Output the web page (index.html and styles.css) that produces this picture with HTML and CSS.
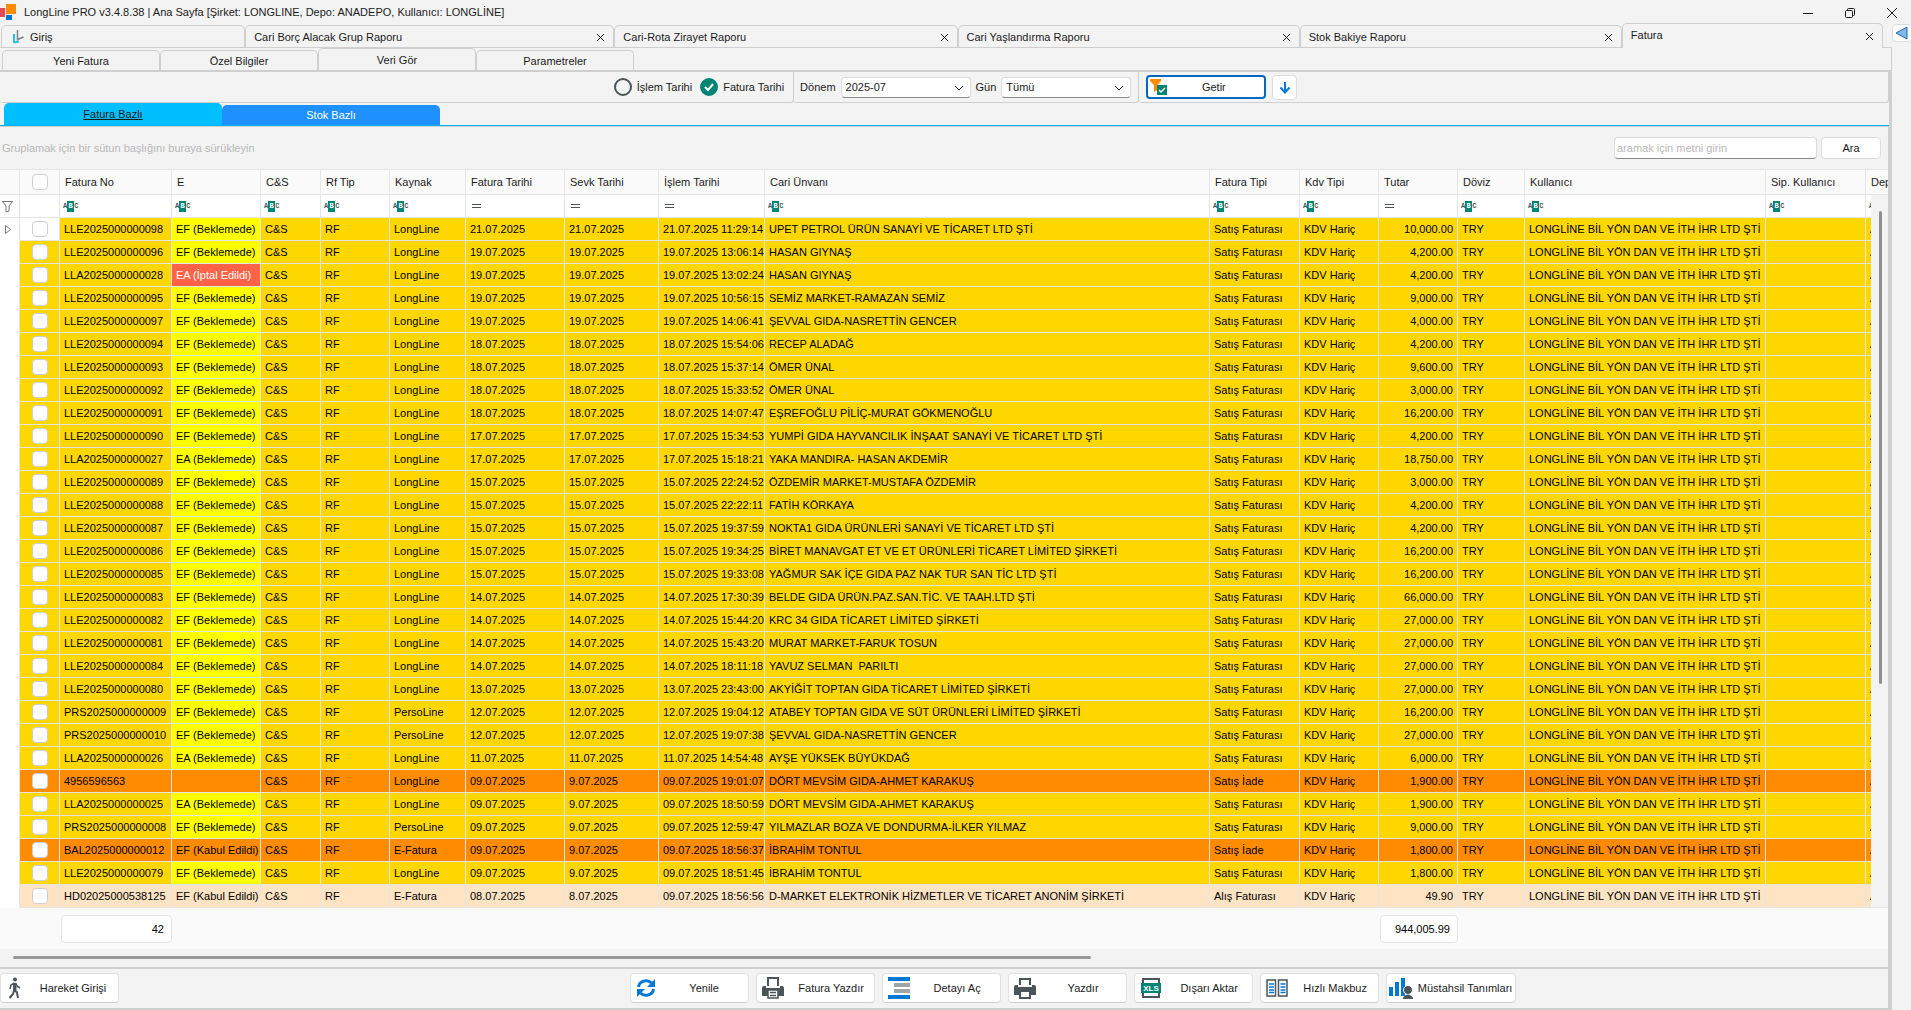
FILE: index.html
```
<!DOCTYPE html>
<html lang="tr">
<head>
    <meta charset="UTF-8">
    <meta name="viewport" content="width=device-width, initial-scale=1.0">
    <title>LongLine PRO v3.4.8.38 | Ana Sayfa</title>
    <link rel="stylesheet" href="styles.css">
</head>
<body>
    <header class="titlebar">
        <svg class="logo" width="16" height="18" viewBox="0 0 16 18"><rect x="0" y="5" width="5" height="9" fill="#e74856"/><rect x="6" y="1" width="10" height="10" fill="#ff8c00"/><rect x="6" y="12" width="6" height="5" fill="#0078d7"/></svg>
        <h1>LongLine PRO v3.4.8.38 | Ana Sayfa [Şirket: LONGLINE, Depo: ANADEPO, Kullanıcı: LONGLİNE]</h1>
        <div class="window-buttons">
            <button aria-label="Simge durumuna küçült"><svg width="12" height="12"><path d="M1 6.5h10"/></svg></button>
            <button aria-label="Önceki boyut"><svg width="12" height="12"><rect x="1.5" y="3.5" width="7" height="7" rx="1"/><path d="M3.5 3.5v-1q0-1 1-1h5q1 0 1 1v5q0 1-1 1h-1"/></svg></button>
            <button aria-label="Kapat"><svg width="12" height="12"><path d="M1 1l10 10M11 1L1 11"/></svg></button>
        </div>
    </header>

    <div class="frame">
        <main class="workspace">
            <nav class="doc-tabs">
                <div class="doc-tab home">
                    <svg width="14" height="14" viewBox="0 0 14 14" fill="none"><path d="M2 4v9M2 12.500l5-1" stroke="#1fc8d8" stroke-width="2"/><path d="M5.500 0v9.500l6-2.500" stroke="#7d8488" stroke-width="1.500"/></svg>
                    <button class="name">Giriş</button>
                </div>
                <div class="doc-tab borc"><button class="name">Cari Borç Alacak Grup Raporu</button><button class="close" aria-label="Kapat"><svg width="9" height="9"><path d="M1 1l7 7M8 1L1 8"/></svg></button></div>
                <div class="doc-tab rota"><button class="name">Cari-Rota Zirayet Raporu</button><button class="close" aria-label="Kapat"><svg width="9" height="9"><path d="M1 1l7 7M8 1L1 8"/></svg></button></div>
                <div class="doc-tab yas"><button class="name">Cari Yaşlandırma Raporu</button><button class="close" aria-label="Kapat"><svg width="9" height="9"><path d="M1 1l7 7M8 1L1 8"/></svg></button></div>
                <div class="doc-tab stok"><button class="name">Stok Bakiye Raporu</button><button class="close" aria-label="Kapat"><svg width="9" height="9"><path d="M1 1l7 7M8 1L1 8"/></svg></button></div>
                <div class="doc-tab fatura active"><button class="name">Fatura</button><button class="close" aria-label="Kapat"><svg width="9" height="9"><path d="M1 1l7 7M8 1L1 8"/></svg></button></div>
            </nav>

            <div class="panel">
                <nav class="sub-tabs">
                    <button>Yeni Fatura</button>
                    <button>Özel Bilgiler</button>
                    <button class="active">Veri Gör</button>
                    <button>Parametreler</button>
                </nav>

                <div class="sub-content">
                    <form class="toolbar">
                        <div class="group dates">
                            <label><input type="radio" name="tarih"> İşlem Tarihi</label>
                            <label><input type="radio" name="tarih" checked><svg class="tick" width="18" height="18"><path d="M5 9l3 3 5-6"/></svg> Fatura Tarihi</label>
                        </div>
                        <div class="group period">
                            <label for="donem">Dönem</label>
                            <span class="select"><select id="donem"><option>2025-07</option></select><svg width="10" height="6"><path d="M1 1l4 4 4-4"/></svg></span>
                            <label for="gun">Gün</label>
                            <span class="select"><select id="gun"><option>Tümü</option></select><svg width="10" height="6"><path d="M1 1l4 4 4-4"/></svg></span>
                        </div>
                        <div class="group actions">
                            <button type="button" class="fetch">
                                <svg width="17" height="16" viewBox="0 0 17 16"><path d="M0 0h11v2L7.500 6v5L4 13V6L0 2z" fill="#ff8c00"/><rect x="7" y="6" width="10" height="10" fill="#008575"/><path d="M9 11l2 2 4-4" fill="none" stroke="#fff" stroke-width="1.500"/></svg>
                                <span>Getir</span>
                            </button>
                            <button type="button" class="down" aria-label="Aşağı"><svg width="12" height="14" viewBox="0 0 12 14"><path d="M6 1v10M1.500 6.500L6 11.500l4.500-5" fill="none" stroke="#0078d7" stroke-width="2"/></svg></button>
                        </div>
                    </form>

                    <nav class="view-tabs">
                        <button class="active">Fatura Bazlı</button>
                        <button>Stok Bazlı</button>
                    </nav>

                    <div class="grid-content">
                        <div class="group-panel">
                            <span class="hint">Gruplamak için bir sütun başlığını buraya sürükleyin</span>
                            <input type="text" class="search" aria-label="Ara" placeholder="aramak için metni girin">
                            <button class="find">Ara</button>
                        </div>

                        <div class="grid">
                            <table>
                                <colgroup>
                                    <col class="w-ind"><col class="w-check"><col class="w-no"><col class="w-e"><col class="w-cs"><col class="w-rf"><col class="w-src"><col class="w-date"><col class="w-ship"><col class="w-time"><col class="w-title"><col class="w-type"><col class="w-kdv"><col class="w-kdv"><col class="w-cur"><col class="w-user"><col class="w-order"><col>
                                </colgroup>
                                <thead>
                                    <tr>
                                        <th></th><th class="center"><input type="checkbox" aria-label="Tümünü seç"></th>
                                        <th>Fatura No</th><th>E</th><th>C&amp;S</th><th>Rf Tip</th><th>Kaynak</th><th>Fatura Tarihi</th><th>Sevk Tarihi</th><th>İşlem Tarihi</th><th>Cari Ünvanı</th><th>Fatura Tipi</th><th>Kdv Tipi</th><th>Tutar</th><th>Döviz</th><th>Kullanıcı</th><th>Sip. Kullanıcı</th><th>Depo</th>
                                    </tr>
                                    <tr class="filter" id="filter"></tr>
                                </thead>
                                <tbody id="rows"></tbody>
                                <tfoot>
                                    <tr>
                                        <td colspan="2"></td>
                                        <td><output>42</output></td>
                                        <td colspan="10"></td>
                                        <td><output>944,005.99</output></td>
                                        <td colspan="4"></td>
                                    </tr>
                                </tfoot>
                            </table>
                            <div class="v-scroll"><div class="thumb"></div></div>
                        </div>
                        <div class="h-scroll"><div class="thumb"></div></div>

                        <footer class="commands">
                            <button>
                                <svg width="18" height="22" viewBox="0 0 18 22" fill="none" stroke="#4a5459"><circle cx="9" cy="2.500" r="2" fill="#4a5459" stroke="none"/><path d="M8.500 6.500l-.5 6 3 3 1 5.500M8 13.500l-1 3.500-3.500 4" stroke-width="2"/><path d="M8.500 6L5 8l-1 4M9.500 6l2 3.500 2.500 1.500" stroke-width="1.500"/><path d="M7 6h3.500v7H7.500z" fill="#4a5459" stroke="none"/></svg>
                                <span>Hareket Girişi</span>
                            </button>
                            <div class="command-group">
                                <button>
                                    <svg width="20" height="20" viewBox="0 0 20 20" fill="none" stroke="#0078d7" stroke-width="3"><path d="M2.500 9A7.500 7 0 0 1 15.500 5M17.500 11A7.500 7 0 0 1 4.500 15"/><path d="M19 1v8h-8zM1 19v-8h8z" fill="#0078d7" stroke="none"/></svg>
                                    <span>Yenile</span>
                                </button>
                                <button>
                                    <svg width="22" height="24" viewBox="0 0 22 24"><path d="M6 10V2h10v8" fill="#fff" stroke="#4a5459" stroke-width="2"/><path d="M0 12q0-2 2-2h2v2h14v-2h2q2 0 2 2v8H0z" fill="#4a5459"/><path d="M6 14h10v8H6z" fill="#fff" stroke="#4a5459" stroke-width="1.500"/><path d="M8 16.500h6M8 19.500h6" stroke="#4a5459" stroke-width="1.500"/></svg>
                                    <span>Fatura Yazdır</span>
                                </button>
                                <button>
                                    <svg width="22" height="24" viewBox="0 0 22 24"><path d="M0 1h22v4H0zM0 19h22v4H0z" fill="#0078d7"/><path d="M6 7h16v4H6zM6 13h16v4H6z" fill="#a0a5a8"/></svg>
                                    <span>Detayı Aç</span>
                                </button>
                                <button>
                                    <svg width="22" height="22" viewBox="0 0 22 22"><path d="M6 8V2h10v6" fill="#fff" stroke="#4a5459" stroke-width="2"/><path d="M0 10q0-2 2-2h2v2h14V8h2q2 0 2 2v8H0z" fill="#4a5459"/><path d="M6 14h10v7H6z" fill="#fff" stroke="#4a5459" stroke-width="2"/></svg>
                                    <span>Yazdır</span>
                                </button>
                                <button>
                                    <svg width="22" height="22" viewBox="0 0 22 22"><path d="M3 2h16v18H3z" fill="#fff" stroke="#4a5459" stroke-width="2"/><rect x="1" y="6" width="20" height="10" fill="#008575"/><text x="11" y="14" class="xls">XLS</text></svg>
                                    <span>Dışarı Aktar</span>
                                </button>
                                <button>
                                    <svg width="22" height="18" viewBox="0 0 22 18"><path d="M1 1h8.500v16H1zM12.500 1H21v16h-8.500z" fill="#fff" stroke="#4a5459" stroke-width="1.500"/><path d="M3 5h5M3 8h5M3 11h5M3 13.500h5M14.500 5h5M14.500 8h5M14.500 11h5M14.500 13.500h5" stroke="#0078d7" stroke-width="1.500"/></svg>
                                    <span>Hızlı Makbuz</span>
                                </button>
                                <button class="wide">
                                    <svg width="24" height="22" viewBox="0 0 24 22"><path d="M0 10h4v9H0zM6 5h4v14H6zM12 1h4v18h-4z" fill="#0078d7"/><circle cx="19" cy="13" r="4.500" fill="#4a5459" stroke="#fff"/><path d="M14 22v-1q1-3 5-3.500 4 .5 5 3.500v1z" fill="#4a5459"/></svg>
                                    <span>Müstahsil Tanımları</span>
                                </button>
                            </div>
                        </footer>
                    </div>
                </div>
            </div>
        </main>
        <aside class="side">
            <button aria-label="Paneli aç"><svg width="13" height="14" viewBox="0 0 13 14"><path d="M12 1v12L1 7z" fill="#7db9ea" stroke="#2b68b5"/></svg></button>
        </aside>
    </div>

    <script src="script.js"></script>
</body>
</html>
```
FILE: styles.css
```
* {
    box-sizing: border-box;
}
body {
    margin: 0;
    min-height: 100vh;
    display: flex;
    flex-direction: column;
    background-color: #f3f3f3;
    color: #1b1b1b;
    font-family: "Liberation Sans", Arial, sans-serif;
    font-size: 11px;
    line-height: 14px;
    overflow: hidden;
}
button, input, select {
    font: inherit;
    color: inherit;
    margin: 0;
}
button {
    padding: 0;
    border: none;
    background: none;
    white-space: nowrap;
}

/* title bar */
.titlebar {
    display: flex;
    align-items: center;
    height: 23px;
    gap: 8px;
}
.titlebar h1 {
    flex: 1;
    margin: 0;
    font-size: 11px;
    font-weight: normal;
}
.window-buttons {
    display: flex;
    gap: 4px;
}
.window-buttons button {
    width: 38px;
    height: 22px;
}
.window-buttons svg, .close svg, .select svg {
    fill: none;
    stroke: #1b1b1b;
    vertical-align: middle;
}

.frame {
    flex: 1;
    display: flex;
}
.workspace {
    flex: 1;
    min-width: 0;
    display: flex;
    flex-direction: column;
}
.side {
    width: 19px;
    padding-top: 1px;
}
.side button {
    display: flex;
    align-items: center;
    width: 20px;
    height: 18px;
    padding-left: 2px;
    background: #fff;
    border: 1px solid #dcdcdc;
    border-radius: 4px;
}

/* document tabs */
.doc-tabs {
    display: flex;
    align-items: flex-end;
    height: 25px;
    padding: 0 9px 0 1px;
    border-bottom: 1px solid #cfcfcf;
}
.doc-tab {
    display: flex;
    align-items: center;
    height: 22px;
    min-width: 0;
    padding: 0 8px;
    border: 1px solid #cfcfcf;
    border-bottom: none;
    border-radius: 5px 5px 0 0;
}
.doc-tab.active {
    height: 25px;
    margin-bottom: -1px;
    padding-bottom: 2px;
    background: #f3f3f3;
}
.doc-tab .name {
    flex: 1;
    text-align: left;
}
.doc-tab.home {
    gap: 4px;
    padding-left: 10px;
}
.home { flex: 1 1 244px; }
.borc { flex: 1 1 369px; }
.rota { flex: 1 1 343px; }
.yas { flex: 1 1 342px; }
.stok { flex: 1 1 322px; }
.fatura { flex: 1 1 261px; }

.panel {
    flex: 1;
    display: flex;
    flex-direction: column;
    border-right: 1px solid #cfcfcf;
}
.sub-tabs {
    display: flex;
    align-items: flex-end;
    height: 24px;
    padding-left: 2px;
    border-bottom: 2px solid #cfcfcf;
}
.sub-tabs button {
    width: 158px;
    height: 20px;
    border: 1px solid #cfcfcf;
    border-bottom: none;
    border-radius: 5px 5px 0 0;
}
.sub-tabs button.active {
    height: 22px;
}
.sub-content {
    flex: 1;
    display: flex;
    flex-direction: column;
    border-right: 2px solid #cfcfcf;
}

/* filter toolbar */
.toolbar {
    display: flex;
    height: 31px;
}
.group {
    display: flex;
    align-items: center;
    border-right: 1px solid #cfcfcf;
    border-bottom: 1px solid #cfcfcf;
    border-radius: 0 0 3px 3px;
}
.dates {
    flex: 794 1 0;
    justify-content: flex-end;
    gap: 8px;
    padding-right: 9px;
}
.dates label {
    position: relative;
    display: flex;
    align-items: center;
    gap: 5px;
}
.dates input {
    appearance: none;
    width: 18px;
    height: 18px;
    border: 2px solid #4a5459;
    border-radius: 50%;
}
.dates input:checked {
    border-color: #008575;
    background: #008575;
}
.tick {
    position: absolute;
    left: 0;
    fill: none;
    stroke: #fff;
    stroke-width: 2;
    pointer-events: none;
}
.period {
    gap: 5px;
    padding: 0 7px 0 6px;
}
.select {
    position: relative;
    display: flex;
}
.select select {
    appearance: none;
    width: 130px;
    height: 21px;
    padding: 0 4px;
    background: #fff;
    border: 1px solid #dcdcdc;
    border-bottom-color: #8a8a8a;
    border-radius: 4px;
}
.select svg {
    position: absolute;
    right: 7px;
    top: 8px;
    pointer-events: none;
}
.actions {
    flex: 751 1 0;
    gap: 6px;
    padding-left: 7px;
}
.fetch {
    display: flex;
    align-items: center;
    width: 120px;
    height: 24px;
    padding-left: 2px;
    background: #fff;
    border: 2px solid #0067c0;
    border-radius: 4px;
}
.fetch span {
    flex: 1;
    padding-right: 4px;
}
.down {
    width: 25px;
    height: 25px;
    background: #fff;
    border: 1px solid #dcdcdc;
    border-radius: 4px;
}
.down svg {
    vertical-align: middle;
}

/* coloured view tabs */
.view-tabs {
    display: flex;
    align-items: flex-end;
    height: 23px;
    padding-left: 4px;
    border-bottom: 1px solid #00b4f0;
}
.view-tabs button {
    width: 218px;
    height: 20px;
    border-radius: 5px 5px 0 0;
    background: #1e90ff;
    color: #fff;
}
.view-tabs button.active {
    height: 22px;
    background: #00bfff;
    color: #1b1b1b;
    text-decoration: underline;
}
.grid-content {
    flex: 1;
    border-top: 1px solid #cfcfcf;
    border-right: 1px solid #cfcfcf;
}
.group-panel {
    display: flex;
    align-items: center;
    height: 42px;
    gap: 4px;
    padding: 0 7px 0 2px;
}
.hint {
    flex: 1;
    color: #b8b8b8;
}
.search {
    width: 203px;
    height: 22px;
    padding: 0 2px;
    background: #fff;
    border: 1px solid #dcdcdc;
    border-bottom-color: #8a8a8a;
    border-radius: 4px;
}
.search::placeholder {
    color: #b8b8b8;
}
.find {
    width: 60px;
    height: 22px;
    background: #fff;
    border: 1px solid #dcdcdc;
    border-radius: 4px;
}

/* invoice grid */
.grid {
    position: relative;
}
table {
    width: 100%;
    table-layout: fixed;
    border-collapse: separate;
    border-spacing: 0;
}
.w-ind { width: 20px; }
.w-check { width: 40px; }
.w-no { width: 112px; }
.w-e { width: 89px; }
.w-cs { width: 60px; }
.w-rf { width: 69px; }
.w-src { width: 76px; }
.w-date { width: 99px; }
.w-ship { width: 94px; }
.w-time { width: 106px; }
.w-title { width: 445px; }
.w-type { width: 90px; }
.w-kdv { width: 79px; }
.w-cur { width: 67px; }
.w-user { width: 241px; }
.w-order { width: 100px; }
th, td {
    height: 23px;
    padding: 0 0 0 4px;
    border-right: 1px solid #e5e5e5;
    border-bottom: 1px solid #e5e5e5;
    overflow: hidden;
    white-space: pre;
    text-align: left;
    font-weight: normal;
    color: #000;
}
th {
    height: 26px;
    padding-left: 5px;
    border-top: 1px solid #e5e5e5;
    background: #fafafa;
    color: #1b1b1b;
}
th.center, td.center {
    padding: 0;
    text-align: center;
}
th:last-child, td:last-child {
    border-right: none;
}
.filter td {
    padding-left: 3px;
    background: #fff;
}
td.ind {
    padding-left: 3px;
    background: #fff;
}
.filter td.ind {
    padding-left: 1px;
}
tbody td.ind {
    border-bottom-color: #fff;
}
tbody tr {
    background: #ffd700;
}
tbody tr.return {
    background: #ff8c00;
}
tbody tr.purchase {
    background: #ffe4c4;
}
tbody tr.current .center {
    background: #fff;
}
td.waiting {
    background: #ffff00;
}
td.cancelled {
    background: #ff6347;
    color: #fff;
}
td.amount {
    padding-right: 4px;
    text-align: right;
}
td svg {
    display: block;
}
table input[type="checkbox"] {
    appearance: none;
    display: block;
    width: 16px;
    height: 16px;
    margin: 0 auto;
    background: #fff;
    border: 1px solid #cfcfcf;
    border-radius: 4px;
}
.abc {
    display: flex;
    align-items: center;
    font-family: "Liberation Mono", monospace;
    font-size: 7px;
    font-weight: bold;
    line-height: 11px;
    color: #4a5459;
}
.abc b {
    width: 7px;
    background: #008575;
    color: #fff;
    text-align: center;
}
.equals {
    display: block;
    width: 9px;
    height: 4px;
    margin-left: 3px;
    border: solid #4a5459;
    border-width: 1px 0;
}
tfoot td {
    height: 41px;
    padding: 0 0 0 1px;
    border: none;
    background: #fafafa;
}
output {
    display: block;
    height: 28px;
    padding-right: 7px;
    line-height: 26px;
    text-align: right;
    background: #fff;
    border: 1px solid #e5e5e5;
    border-radius: 4px;
}
.v-scroll {
    position: absolute;
    top: 26px;
    right: 0;
    bottom: 42px;
    width: 17px;
    padding: 16px 0 0 8px;
    background: #f3f3f3;
}
.v-scroll .thumb {
    width: 3px;
    height: 68%;
    border-radius: 2px;
    background: #8f8f8f;
}
.h-scroll {
    height: 18px;
    padding: 7px 0 0 13px;
}
.h-scroll .thumb {
    width: 57.5%;
    height: 3px;
    border-radius: 2px;
    background: #999;
}

/* command bar */
.commands {
    display: flex;
    align-items: center;
    height: 43px;
    padding-bottom: 2px;
    border-top: 2px solid #cfcfcf;
    border-bottom: 2px solid #cfcfcf;
}
.commands::after {
    content: "";
    flex: 374 1 0;
}
.command-group {
    flex: 514 0 auto;
    display: flex;
    justify-content: flex-end;
    gap: 7px;
}
.commands button {
    display: flex;
    align-items: center;
    gap: 4px;
    width: 119px;
    height: 30px;
    padding: 0 0 0 5px;
    background: #fff;
    border: 1px solid #e0e0e0;
    border-bottom-color: #cfcfcf;
    border-radius: 4px;
}
.commands button.wide {
    width: 130px;
    padding: 0 2px;
}
.commands span {
    flex: 1;
    text-align: center;
}
.xls {
    font-size: 8px;
    font-weight: bold;
    fill: #fff;
    text-anchor: middle;
}
```
FILE: script.js
```
// no, e-status, source, invoice date, ship date, time, title, amount
const invoices = [
    ["LLE2025000000098", "EF (Beklemede)", "LongLine", "21.07.2025", "21.07.2025", "11:29:14", "UPET PETROL ÜRÜN SANAYİ VE TİCARET LTD ŞTİ", "10,000.00"],
    ["LLE2025000000096", "EF (Beklemede)", "LongLine", "19.07.2025", "19.07.2025", "13:06:14", "HASAN GIYNAŞ", "4,200.00"],
    ["LLA2025000000028", "EA (İptal Edildi)", "LongLine", "19.07.2025", "19.07.2025", "13:02:24", "HASAN GIYNAŞ", "4,200.00"],
    ["LLE2025000000095", "EF (Beklemede)", "LongLine", "19.07.2025", "19.07.2025", "10:56:15", "SEMİZ MARKET-RAMAZAN SEMİZ", "9,000.00"],
    ["LLE2025000000097", "EF (Beklemede)", "LongLine", "19.07.2025", "19.07.2025", "14:06:41", "ŞEVVAL GIDA-NASRETTİN GENCER", "4,000.00"],
    ["LLE2025000000094", "EF (Beklemede)", "LongLine", "18.07.2025", "18.07.2025", "15:54:06", "RECEP ALADAĞ", "4,200.00"],
    ["LLE2025000000093", "EF (Beklemede)", "LongLine", "18.07.2025", "18.07.2025", "15:37:14", "ÖMER ÜNAL", "9,600.00"],
    ["LLE2025000000092", "EF (Beklemede)", "LongLine", "18.07.2025", "18.07.2025", "15:33:52", "ÖMER ÜNAL", "3,000.00"],
    ["LLE2025000000091", "EF (Beklemede)", "LongLine", "18.07.2025", "18.07.2025", "14:07:47", "EŞREFOĞLU PİLİÇ-MURAT GÖKMENOĞLU", "16,200.00"],
    ["LLE2025000000090", "EF (Beklemede)", "LongLine", "17.07.2025", "17.07.2025", "15:34:53", "YUMPİ GIDA HAYVANCILIK İNŞAAT SANAYİ VE TİCARET LTD ŞTİ", "4,200.00"],
    ["LLA2025000000027", "EA (Beklemede)", "LongLine", "17.07.2025", "17.07.2025", "15:18:21", "YAKA MANDIRA- HASAN AKDEMİR", "18,750.00"],
    ["LLE2025000000089", "EF (Beklemede)", "LongLine", "15.07.2025", "15.07.2025", "22:24:52", "ÖZDEMİR MARKET-MUSTAFA ÖZDEMİR", "3,000.00"],
    ["LLE2025000000088", "EF (Beklemede)", "LongLine", "15.07.2025", "15.07.2025", "22:22:11", "FATİH KÖRKAYA", "4,200.00"],
    ["LLE2025000000087", "EF (Beklemede)", "LongLine", "15.07.2025", "15.07.2025", "19:37:59", "NOKTA1 GIDA ÜRÜNLERİ SANAYİ VE TİCARET LTD ŞTİ", "4,200.00"],
    ["LLE2025000000086", "EF (Beklemede)", "LongLine", "15.07.2025", "15.07.2025", "19:34:25", "BİRET MANAVGAT ET VE ET ÜRÜNLERİ TİCARET LİMİTED ŞİRKETİ", "16,200.00"],
    ["LLE2025000000085", "EF (Beklemede)", "LongLine", "15.07.2025", "15.07.2025", "19:33:08", "YAĞMUR SAK İÇE GIDA PAZ NAK TUR SAN TİC LTD ŞTİ", "16,200.00"],
    ["LLE2025000000083", "EF (Beklemede)", "LongLine", "14.07.2025", "14.07.2025", "17:30:39", "BELDE GIDA ÜRÜN.PAZ.SAN.TİC. VE TAAH.LTD ŞTİ", "66,000.00"],
    ["LLE2025000000082", "EF (Beklemede)", "LongLine", "14.07.2025", "14.07.2025", "15:44:20", "KRC 34 GIDA TİCARET LİMİTED ŞİRKETİ", "27,000.00"],
    ["LLE2025000000081", "EF (Beklemede)", "LongLine", "14.07.2025", "14.07.2025", "15:43:20", "MURAT MARKET-FARUK TOSUN", "27,000.00"],
    ["LLE2025000000084", "EF (Beklemede)", "LongLine", "14.07.2025", "14.07.2025", "18:11:18", "YAVUZ SELMAN  PARILTI", "27,000.00"],
    ["LLE2025000000080", "EF (Beklemede)", "LongLine", "13.07.2025", "13.07.2025", "23:43:00", "AKYİĞİT TOPTAN GIDA TİCARET LİMİTED ŞİRKETİ", "27,000.00"],
    ["PRS2025000000009", "EF (Beklemede)", "PersoLine", "12.07.2025", "12.07.2025", "19:04:12", "ATABEY TOPTAN GIDA VE SÜT ÜRÜNLERİ LİMİTED ŞİRKETİ", "16,200.00"],
    ["PRS2025000000010", "EF (Beklemede)", "PersoLine", "12.07.2025", "12.07.2025", "19:07:38", "ŞEVVAL GIDA-NASRETTİN GENCER", "27,000.00"],
    ["LLA2025000000026", "EA (Beklemede)", "LongLine", "11.07.2025", "11.07.2025", "14:54:48", "AYŞE YÜKSEK BÜYÜKDAĞ", "6,000.00"],
    ["4956596563", "", "LongLine", "09.07.2025", "9.07.2025", "19:01:07", "DÖRT MEVSİM GIDA-AHMET KARAKUŞ", "1,900.00", "Satış İade"],
    ["LLA2025000000025", "EA (Beklemede)", "LongLine", "09.07.2025", "9.07.2025", "18:50:59", "DÖRT MEVSİM GIDA-AHMET KARAKUŞ", "1,900.00"],
    ["PRS2025000000008", "EF (Beklemede)", "PersoLine", "09.07.2025", "9.07.2025", "12:59:47", "YILMAZLAR BOZA VE DONDURMA-İLKER YILMAZ", "9,000.00"],
    ["BAL2025000000012", "EF (Kabul Edildi)", "E-Fatura", "09.07.2025", "9.07.2025", "18:56:37", "İBRAHİM TONTUL", "1,800.00", "Satış İade"],
    ["LLE2025000000079", "EF (Beklemede)", "LongLine", "09.07.2025", "9.07.2025", "18:51:45", "İBRAHİM TONTUL", "1,800.00"],
    ["HD02025000538125", "EF (Kabul Edildi)", "E-Fatura", "08.07.2025", "8.07.2025", "18:56:56", "D-MARKET ELEKTRONİK HİZMETLER VE TİCARET ANONİM ŞİRKETİ", "49.90", "Alış Faturası"]
];

const rowClasses = { "Satış İade": "return", "Alış Faturası": "purchase" };

function statusClass(status) {
    if (status.includes("Beklemede")) return "waiting";
    if (status.includes("İptal")) return "cancelled";
    return "";
}

document.getElementById("rows").innerHTML = invoices.map((row, i) => {
    const [no, status, source, date, ship, time, title, amount, type = "Satış Faturası"] = row;
    // the last invoice was entered a day after its own date
    const day = date === "08.07.2025" ? "09.07.2025" : date;
    const marker = i === 0 ? '<svg width="10" height="11"><path d="M2.5 1.500l5 4-5 4z" fill="none" stroke="#777"/></svg>' : "";
    return `<tr class="${rowClasses[type] || ""}${i === 0 ? " current" : ""}">
        <td class="ind">${marker}</td><td class="center"><input type="checkbox" aria-label="${no}"></td>
        <td>${no}</td><td class="${statusClass(status)}">${status}</td><td>C&amp;S</td><td>RF</td><td>${source}</td>
        <td>${date}</td><td>${ship}</td><td>${day} ${time}</td><td>${title}</td><td>${type}</td><td>KDV Hariç</td>
        <td class="amount">${amount}</td><td>TRY</td><td>LONGLİNE BİL YÖN DAN VE İTH İHR LTD ŞTİ</td><td></td><td>ANADEPO</td>
    </tr>`;
}).join("");

// filter row: "=" for dates and amounts, ABC for text columns
const abc = '<span class="abc">A<b>B</b>C</span>';
const equals = '<span class="equals"></span>';
const funnel = '<svg width="13" height="13"><path d="M1.500 1.500h10L8 6v5l-3 1V6z" fill="none" stroke="#777"/></svg>';
const filters = [abc, abc, abc, abc, abc, equals, equals, equals, abc, abc, abc, equals, abc, abc, abc, abc];
document.getElementById("filter").innerHTML = `<td class="ind">${funnel}</td><td></td>` +
    filters.map(icon => `<td>${icon}</td>`).join("");
```
